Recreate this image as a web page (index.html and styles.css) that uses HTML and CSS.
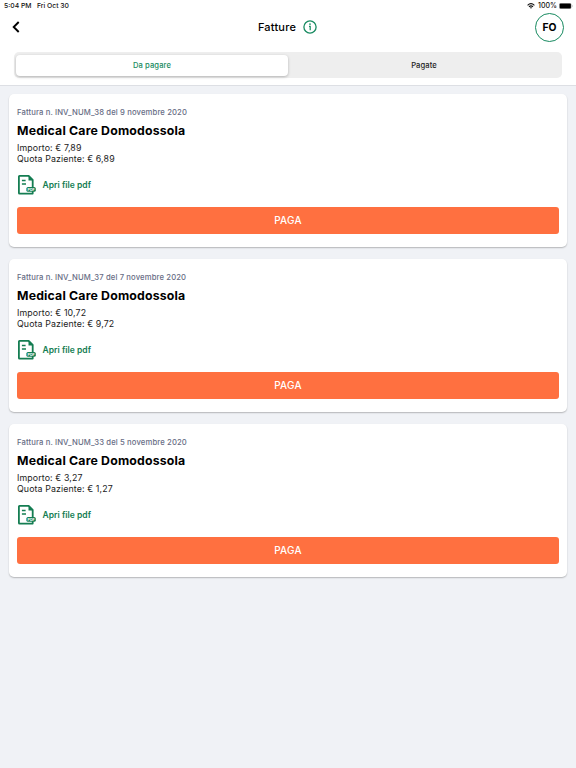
FILE: index.html
```html
<!DOCTYPE html>
<html lang="it">
<head>
<meta charset="utf-8">
<title>Fatture</title>
<link rel="stylesheet" href="styles.css">
</head>
<body>
<svg class="defs" aria-hidden="true">
  <symbol id="pdf" viewBox="0 0 18 20">
    <path d="M1.5 .9H10.7L14.7 5V18.6H1.5Q.9 18.6 .9 18V1.5Q.9 .9 1.5 .9Z" fill="none" stroke="#147d52" stroke-width="1.8" stroke-linejoin="round"/>
    <path d="M10.5 .8L15.2 5.6H10.5Z" fill="#147d52"/>
    <path d="M3.9 5.5H7.6M3.9 9H8" stroke="#147d52" stroke-width="1.4"/>
    <rect x="8.4" y="12" width="9.4" height="4.8" rx="1.6" fill="#147d52"/>
    <text x="13.1" y="15.6" text-anchor="middle" class="pdf-label">PDF</text>
  </symbol>
</svg>
<header class="header">
  <div class="status">
    <span class="time">5:04 PM</span><span class="date">Fri Oct 30</span>
    <svg class="wifi" width="8" height="6" viewBox="0 0 8 6"><path d="M.6 2.3Q4-.9 7.4 2.3M2 3.8Q4 2 6 3.8" fill="none" stroke="#111" stroke-width="1.15"/><path d="M2.9 4.6Q4 3.7 5.1 4.6L4 5.8Z" fill="#111"/></svg>
    <span class="charge">100%</span>
    <svg class="battery" width="14" height="6" viewBox="0 0 14 6"><rect x=".25" y=".25" width="12" height="5.5" rx="1.5" fill="#fff" stroke="#888" stroke-width=".5"/><rect x=".6" y=".6" width="11.3" height="4.8" rx="1" fill="#000"/><path d="M13 2Q14 3 13 4Z" fill="#777"/></svg>
  </div>
  <nav class="navbar">
    <svg class="back" width="8" height="12" viewBox="0 0 8 12"><path d="M6.7 1L1.7 6L6.7 11" fill="none" stroke="#000" stroke-width="1.9"/></svg>
    <div class="heading"><h1>Fatture</h1>
      <svg width="14" height="14" viewBox="0 0 14 14"><circle cx="7" cy="7" r="6.1" fill="none" stroke="#178a60" stroke-width="1.3"/><circle cx="7" cy="4.1" r=".85" fill="#178a60"/><path d="M6 6.3H7.2V10.2" fill="none" stroke="#178a60" stroke-width="1.2"/></svg>
    </div>
    <div class="avatar">FO</div>
  </nav>
  <div class="tabs"><div class="tab active">Da pagare</div><div class="tab rest">Pagate</div></div>
</header>
<main class="list">
  <article class="card">
    <p class="number">Fattura n. INV_NUM_38 del 9 novembre 2020</p>
    <h2>Medical Care Domodossola</h2>
    <p class="line">Importo: € 7,89</p>
    <p class="line">Quota Paziente: € 6,89</p>
    <div class="file"><svg width="18" height="20"><use href="#pdf"/></svg><span>Apri file pdf</span></div>
    <div class="pay">PAGA</div>
  </article>
  <article class="card">
    <p class="number">Fattura n. INV_NUM_37 del 7 novembre 2020</p>
    <h2>Medical Care Domodossola</h2>
    <p class="line">Importo: € 10,72</p>
    <p class="line">Quota Paziente: € 9,72</p>
    <div class="file"><svg width="18" height="20"><use href="#pdf"/></svg><span>Apri file pdf</span></div>
    <div class="pay">PAGA</div>
  </article>
  <article class="card">
    <p class="number">Fattura n. INV_NUM_33 del 5 novembre 2020</p>
    <h2>Medical Care Domodossola</h2>
    <p class="line">Importo: € 3,27</p>
    <p class="line">Quota Paziente: € 1,27</p>
    <div class="file"><svg width="18" height="20"><use href="#pdf"/></svg><span>Apri file pdf</span></div>
    <div class="pay">PAGA</div>
  </article>
</main>
</body>
</html>
```
FILE: styles.css
```css
* { box-sizing: border-box; }
body { margin: 0; min-height: 768px; background: #f0f2f6; color: #000; font-family: Inter, "Liberation Sans", sans-serif; }
h1, h2, p { margin: 0; }
svg { display: block; flex: none; }
.defs { display: none; }
.pdf-label { font-size: 3.6px; font-weight: 700; fill: #fff; }
.header { height: 86px; background: #fff; border-bottom: 1px solid #dddfe4; }
.status { display: flex; align-items: center; height: 12px; padding: 0 3px 0 4px; font-size: 6.8px; line-height: 12px; font-weight: 500; color: #111; white-space: nowrap; }
.date { margin-left: 5.5px; }
.wifi { margin-left: auto; }
.charge { margin: 0 2px 0 3px; font-size: 7px; }
.navbar { display: grid; grid-template-columns: 1fr auto 1fr; align-items: center; height: 30.5px; padding: 0 12px; }
.heading { display: flex; align-items: center; gap: 7px; margin-right: 1px; }
.heading h1 { font-size: 11px; line-height: 16px; font-weight: 500; letter-spacing: .2px; }
.avatar { justify-self: end; width: 29px; height: 29px; border: 1.5px solid #178a60; border-radius: 50%; font-size: 10.3px; line-height: 27px; font-weight: 700; text-align: center; }
.tabs { display: grid; grid-template-columns: 274px 1fr; height: 26px; margin: 9.5px 14px 0; padding: 2.5px 0 2.5px 2px; border-radius: 5px; background: #eee; }
.tab { height: 21px; border-radius: 4px; text-align: center; font-size: 7.6px; line-height: 21px; font-weight: 500; letter-spacing: .1px; color: #222; }
.tab.active { width: 272px; background: #fff; color: #178a60; box-shadow: 0 1px 3px rgba(0, 0, 0, .25); }
.tab.rest { padding-right: 4px; }
.list { display: flex; flex-direction: column; gap: 12px; padding: 8px 9px; }
.card { height: 153px; padding: 12px 8px 0; border-radius: 5px; background: #fff; box-shadow: 0 1px 1.5px rgba(0, 0, 0, .25); }
.number { height: 14px; font-size: 7.7px; line-height: 14px; font-weight: 500; letter-spacing: .12px; color: #686d85; }
.card h2 { height: 22px; font-size: 12.3px; line-height: 21px; font-weight: 700; letter-spacing: .18px; }
.line { height: 11px; font-size: 8.8px; line-height: 11px; letter-spacing: .12px; color: #222; }
.file { display: flex; align-items: center; gap: 6.5px; height: 20px; margin: 11px 0 12px 1px; color: #147d52; font-size: 8.5px; line-height: 20px; font-weight: 600; letter-spacing: .02px; }
.pay { height: 27px; border-radius: 3px; background: #ff7040; color: #fff; text-align: center; font-size: 10px; line-height: 27px; font-weight: 500; letter-spacing: .2px; }
```
